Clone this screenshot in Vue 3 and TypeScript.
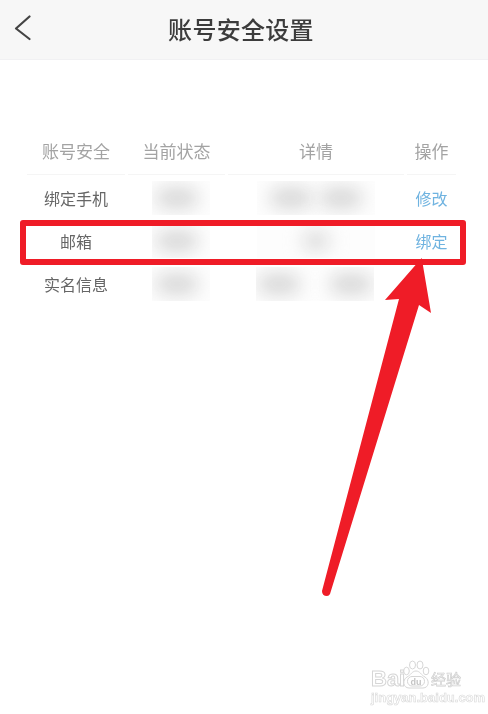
<script setup lang="ts">
interface Row { name: string; action: string; blobs: number; cls: string }
const rows: Row[] = [
  { name: '绑定手机', action: '修改', blobs: 2, cls: 'near' },
  { name: '邮箱', action: '绑定', blobs: 1, cls: 'single' },
  { name: '实名信息', action: '', blobs: 2, cls: 'far' }
]
</script>

<template>
  <div class="page">
    <header class="bar">
      <svg class="back" width="18" height="26" viewBox="0 0 18 26" aria-hidden="true">
        <path d="M15.5 1.5 L2 13.5 L15.5 24" fill="none" stroke="#444" stroke-width="2.2" stroke-linecap="round" stroke-linejoin="round" />
      </svg>
      <h1 class="title">账号安全设置</h1>
    </header>

    <section class="table">
      <div class="row head">
        <div class="cell c1"><span>账号安全</span></div>
        <div class="cell c2"><span>当前状态</span></div>
        <div class="cell c3"><span>详情</span></div>
        <div class="cell c4"><span>操作</span></div>
      </div>
      <div v-for="r in rows" :key="r.name" class="row body">
        <div class="cell c1"><span>{{ r.name }}</span></div>
        <div class="cell c2">
          <div class="smear status"><i class="blob"></i></div>
        </div>
        <div class="cell c3">
          <div class="smear detail" :class="r.cls">
            <i v-for="n in r.blobs" :key="n" class="blob"></i>
          </div>
        </div>
        <div class="cell c4 link"><span>{{ r.action }}</span></div>
      </div>
    </section>

    <div class="overlay" aria-hidden="true">
      <div class="frame"></div>
      <svg class="arrow" width="488" height="714" viewBox="0 0 488 714">
        <path d="M421.7 258 L385 300 L399 299 L322 591 Q322 596 327 596 Q329 596 330 594 L419 305 L431 313 Z" fill="#ef1c27" />
      </svg>
    </div>

    <div class="mark">
      <div class="logo">
        <span class="bai">Bai</span>
        <svg class="paw" width="28" height="29" viewBox="0 0 28 29">
          <g fill="#fff" stroke="#d6d6d6" stroke-width="1">
            <ellipse cx="4.5" cy="11" rx="2.8" ry="3.8" />
            <ellipse cx="10.5" cy="5" rx="3" ry="4" />
            <ellipse cx="18" cy="5" rx="3" ry="4" />
            <ellipse cx="24" cy="11" rx="2.8" ry="3.8" />
            <path d="M14 11 C10 11 9 15 5 17 C0 20 1 28 7 28 L21 28 C27 28 28 20 23 17 C19 15 18 11 14 11 Z" />
            <rect x="5.5" y="16.5" width="17" height="9.5" rx="4.5" />
          </g>
          <text x="14" y="24.5" text-anchor="middle" class="du">du</text>
        </svg>
        <span class="jy">经验</span>
      </div>
      <div class="url">jingyan.baidu.com</div>
    </div>
  </div>
</template>

<style>
html, body { margin: 0; background: #fff; }
</style>

<style scoped>
.page {
  position: relative;
  width: 488px;
  height: 714px;
  overflow: hidden;
  background: #fff;
  font-family: "Noto Sans CJK SC", "Liberation Sans", sans-serif;
}
.bar {
  height: 60px;
  box-sizing: border-box;
  background: #f7f7f7;
  border-bottom: 1px solid #f1f1f3;
  display: flex;
  align-items: center;
  justify-content: center;
  position: relative;
}
.back { position: absolute; left: 14px; top: 15px; }
.title {
  margin: -2px 6px 0 0;
  font-size: 24px;
  line-height: 56px;
  font-weight: 500;
  color: #3c3c3c;
  letter-spacing: 0.3px;
  filter: blur(0.4px);
}
.table {
  margin: 69px 0 0 27px;
  width: 430px;
  display: flex;
  flex-direction: column;
}
.row { display: flex; gap: 3px; }
.cell {
  display: flex;
  align-items: center;
  justify-content: center;
  box-sizing: border-box;
  white-space: nowrap;
}
.c1 { width: 98px; }
.c2 { width: 97px; }
.c3 { width: 176px; }
.c4 { width: 49px; }
.head { height: 46px; margin-bottom: 1px; }
.head .cell {
  padding-bottom: 2px;
  font-size: 17px;
  color: #a3a3a3;
  border-bottom: 1px solid #f5f5f5;
}
.head span, .body span { filter: blur(0.4px); }
.body { height: 43px; }
.body .cell { font-size: 16px; color: #666; }
.body .cell.link { color: #6fb3e0; }
.smear {
  height: 34px;
  overflow: hidden;
  display: flex;
  align-items: center;
  justify-content: center;
  background: #fdfdfd;
}
.status { width: 58px; margin-left: 8px; }
.status .blob { margin-right: 8px; }
.detail { width: 118px; }
.near { gap: 8px; }
.far { gap: 30px; margin-left: -2px; }
.blob {
  display: block;
  flex: none;
  width: 42px;
  height: 20px;
  border-radius: 10px;
  background: #d6d6d6;
  filter: blur(9px);
}
.single .blob { width: 28px; background: #dcdcdc; }
.overlay { position: absolute; inset: 0; pointer-events: none; }
.frame {
  position: absolute;
  left: 20px;
  top: 220px;
  width: 446px;
  height: 45px;
  box-sizing: border-box;
  border: 6px solid #ef1c27;
  border-radius: 3px;
}
.arrow { position: absolute; left: 0; top: 0; }
.mark {
  position: absolute;
  left: 371px;
  top: 660px;
  width: 92px;
  filter: blur(0.4px);
}
.logo { display: flex; align-items: flex-end; height: 29px; }
.bai {
  width: 31px;
  font: 700 22px/20px "Liberation Sans", sans-serif;
  color: #fff;
  -webkit-text-stroke: 1px #d6d6d6;
}
.paw { flex: none; }
.du { font: 700 9px "Liberation Sans", sans-serif; fill: #c4c4c4; }
.jy {
  margin-left: 1px;
  font-size: 15px;
  line-height: 20px;
  white-space: nowrap;
  color: #fff;
  -webkit-text-stroke: 0.7px #d0d0d0;
}
.url {
  margin-top: 1px;
  font: 700 13px/15px "Liberation Sans", sans-serif;
  color: #fff;
  -webkit-text-stroke: 0.6px #d8d8d8;
  white-space: nowrap;
}
</style>
